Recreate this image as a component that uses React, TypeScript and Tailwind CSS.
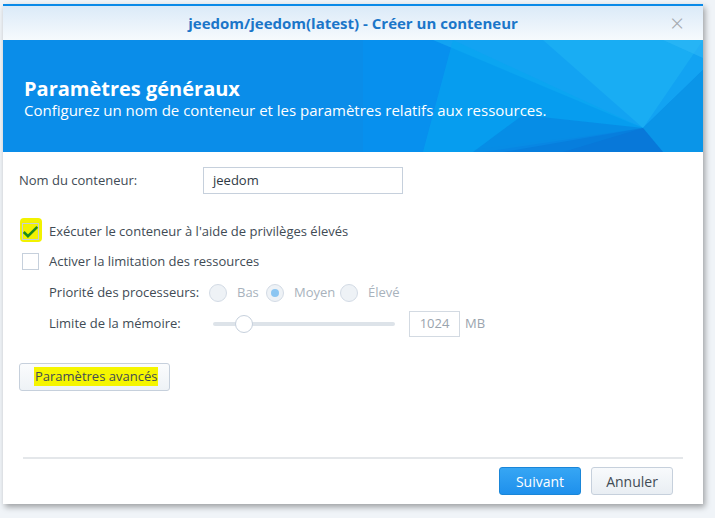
import React from "react";

const font = { fontFamily: '"Open Sans", "Liberation Sans", sans-serif' };

const BannerArt = () => (
  <svg
    className="absolute inset-0 h-full w-full"
    viewBox="0 0 700 112"
    preserveAspectRatio="none">
    <polygon points="360,0 640,0 640,88 450,112 360,112" fill="#0790ee" />
    <polygon points="430,0 700,0 700,30 640,88" fill="#12a3f2" />
    <polygon points="540,0 700,0 640,88" fill="#1db0f4" opacity="0.7" />
    <polygon points="450,0 640,88 480,112 420,112" fill="#07a6f0" opacity="0.6" />
    <polygon points="640,88 700,30 700,112 660,112" fill="#0a95e8" />
    <polygon points="640,88 660,112 500,112" fill="#0773d4" opacity="0.8" />
    <polygon points="520,75 640,88 560,112 470,112" fill="#0682e0" opacity="0.6" />
    <polygon points="660,0 700,0 700,18" fill="#33bbf7" opacity="0.5" />
  </svg>
);

const Radio = ({ checked }: { checked?: boolean }) => (
  <span className="flex h-[18px] w-[18px] items-center justify-center rounded-full border border-[#d3dbe5] bg-[#eef2f6]">
    {checked && <span className="h-[8px] w-[8px] rounded-full bg-[#8cc6f2]" />}
  </span>
);

export default function App() {
  return (
    <div className="h-[518px] w-[715px] overflow-hidden bg-[#f0f4f8] pl-[3px] pt-[4px]" style={font}>
      <div className="flex h-[500px] w-[700px] flex-col bg-white shadow-[2px_3px_6px_rgba(0,0,0,0.35)]">
        <div className="h-[2px] bg-[#0a8ae8]" />
        <div className="relative flex h-[34px] items-center justify-center bg-gradient-to-b from-[#dbeaf8] to-[#f6fafd]">
          <span className="text-[15px] font-bold text-[#1b76c9]">jeedom/jeedom(latest) - Créer un conteneur</span>
          <span className="absolute right-[19px] top-[5px] text-[24px] font-light leading-none text-[#a3a9af]">×</span>
        </div>
        <div className="relative flex h-[112px] flex-col justify-center overflow-hidden bg-[#0a8de9] pl-[21px] pt-[4px]">
          <BannerArt />
          <div className="relative text-[20px] font-bold leading-[25px] text-white">Paramètres généraux</div>
          <div className="relative text-[15px] leading-[19px] text-white">Configurez un nom de conteneur et les paramètres relatifs aux ressources.</div>
        </div>

        <div className="flex flex-1 flex-col px-[16px] pt-[15px] text-[13px] text-[#414b55]">
          <div className="flex items-center">
            <span className="w-[184px]">Nom du conteneur:</span>
            <div className="flex h-[27px] w-[200px] items-center border border-[#c6d0dc] px-[9px] text-[#2f3a45]">jeedom</div>
          </div>

          <div className="mt-[28px] flex items-center">
            <span className="relative ml-[3px] flex h-[17px] w-[17px] items-center justify-center">
              <span className="absolute -left-[2px] -top-[5px] h-[24px] w-[22px] rounded-[4px] bg-[#f2f200]" />
              <span className="absolute inset-0 border border-[#c3ccd6]" />
              <svg className="relative" width="20" height="16" viewBox="0 0 20 16">
                <path d="M2 8 L7 13 L18 2" fill="none" stroke="#1c8a1c" strokeWidth="3" />
              </svg>
            </span>
            <span className="ml-[10px]">Exécuter le conteneur à l'aide de privilèges élevés</span>
          </div>

          <div className="mt-[10px] flex items-center">
            <span className="ml-[3px] h-[17px] w-[17px] border border-[#c6d0dc] bg-white" />
            <span className="ml-[10px]">Activer la limitation des ressources</span>
          </div>

          <div className="mt-[12px] flex items-center pl-[30px] text-[#414b55]">
            <span className="w-[160px]">Priorité des processeurs:</span>
            <Radio />
            <span className="ml-[10px] w-[29px] text-[#a8b2bc]">Bas</span>
            <Radio checked />
            <span className="ml-[10px] w-[46px] text-[#a8b2bc]">Moyen</span>
            <Radio />
            <span className="ml-[10px] text-[#a8b2bc]">Élevé</span>
          </div>

          <div className="mt-[8px] flex items-center pl-[30px]">
            <span className="w-[164px]">Limite de la mémoire:</span>
            <div className="relative flex h-[20px] w-[182px] items-center">
              <div className="h-[4px] w-full rounded-full bg-[#dde3e9]" />
              <span className="absolute left-[22px] top-[1px] h-[18px] w-[18px] rounded-full border border-[#c6d0dc] bg-white" />
            </div>
            <div className="ml-[14px] flex h-[26px] w-[51px] items-center justify-center border border-[#d3dae2] text-[#9aa4ae]">1024</div>
            <span className="ml-[5px] text-[#9aa4ae]">MB</span>
          </div>

          <div className="mt-[26px]">
            <button className="flex h-[28px] w-[151px] items-center rounded-[3px] border border-[#c6d0dc] bg-gradient-to-b from-[#fbfcfd] to-[#eef2f6] pl-[14px]">
              <span className="bg-[#f5f500] px-[1px] text-[#414b55]">Paramètres avancés</span>
            </button>
          </div>

          <div className="mt-auto mx-[4px] h-[2px] bg-[#e4e7ea]" />
          <div className="flex justify-end gap-[10px] pb-[9px] pr-[14px] pt-[8px]">
            <button className="h-[28px] w-[82px] rounded-[3px] border border-[#1a86d8] bg-gradient-to-b from-[#36a6f4] to-[#1e90ec] text-[14px] text-white">Suivant</button>
            <button className="h-[28px] w-[82px] rounded-[3px] border border-[#c6d0dc] bg-gradient-to-b from-[#f8fafc] to-[#e9eef3] text-[14px] text-[#414b55]">Annuler</button>
          </div>
        </div>
      </div>
    </div>
  );
}
